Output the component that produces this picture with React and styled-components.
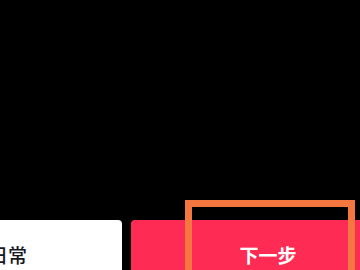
import React from 'react';
import styled, { createGlobalStyle } from 'styled-components';

const GlobalStyle = createGlobalStyle`
  html, body {
    margin: 0;
    padding: 0;
    background: #000;
    overflow: hidden;
  }

  body {
    font-family: "Noto Sans CJK SC", "Noto Sans", sans-serif;
  }
`;

const Screen = styled.div`
  position: relative;
  width: 360px;
  height: 270px;
  overflow: hidden;
  background: #000;
`;

const Preview = styled.div`
  height: 220px;
  background: #000;
`;

// the bar is wider than the visible frame, the screenshot is cropped
const ActionBar = styled.div`
  display: flex;
  gap: 9px;
  margin-left: -106px;
  width: 511px;
`;

const ActionButton = styled.button`
  flex: 0 0 ${({ $width }) => $width}px;
  height: 70px;
  border: none;
  border-radius: 4px;
  display: flex;
  justify-content: center;
  align-items: flex-start;
  padding: 21px 0 0;
  box-sizing: border-box;
  font-family: "Noto Sans CJK SC", sans-serif;
  font-size: 19px;
  font-weight: ${({ $primary }) => ($primary ? 600 : 500)};
  background: ${({ $primary }) => ($primary ? '#fe2c55' : '#fff')};
  color: ${({ $primary }) => ($primary ? '#fff' : '#161823')};
`;

const Highlight = styled.div`
  position: absolute;
  left: 185px;
  top: 200px;
  width: 170px;
  height: 120px;
  box-sizing: border-box;
  border: 7px solid #f3773f;
  pointer-events: none;
`;

export default function App() {
  return (
    <>
      <GlobalStyle />
      <Screen>
        <Preview />
        <ActionBar>
          <ActionButton $width={228}>日常</ActionButton>
          <ActionButton $width={274} $primary>下一步</ActionButton>
        </ActionBar>
        <Highlight />
      </Screen>
    </>
  );
}
